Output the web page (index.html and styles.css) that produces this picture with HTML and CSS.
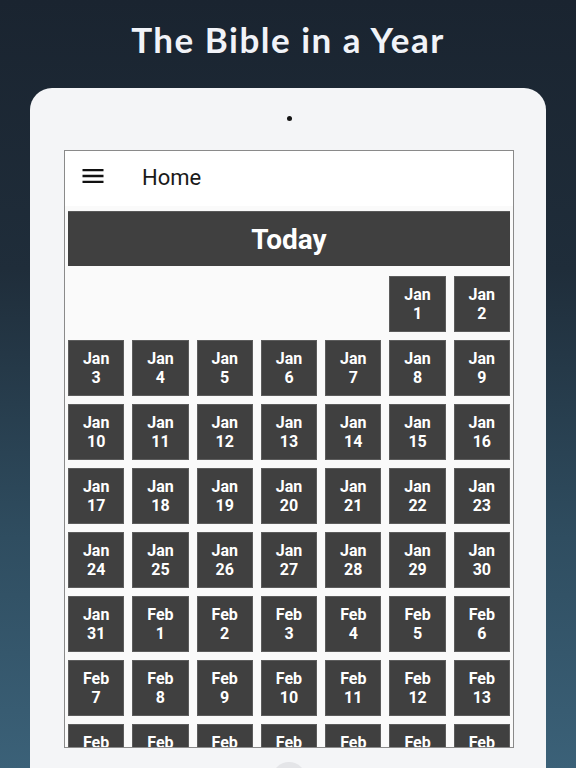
FILE: index.html
```html
<!DOCTYPE html>
<html lang="en">
<head>
	<meta charset="UTF-8">
	<title>The Bible in a Year</title>
	<link rel="stylesheet" href="styles.css">
</head>
<body>

	<h1 class="title">The Bible in a Year</h1>

	<div class="tablet">
		<div class="camera"></div>

		<div class="screen">
			<div class="appbar">
				<svg class="menu" width="28" height="28" viewBox="0 0 24 24">
					<path d="M3 18h18v-2H3v2zm0-5h18v-2H3v2zm0-7v2h18V6H3z" fill="#111"/>
				</svg>
				<span class="page">Home</span>
			</div>

			<div class="today">Today</div>

			<div class="days"></div>
		</div>

		<div class="home-btn"></div>
	</div>

	<script>
		var $days = document.querySelector(".days");
		var months = [["Jan", 31], ["Feb", 20]];	// дальше экран всё равно обрезает

		// 1 января - пятница, перед ним 5 пустых клеток
		for (var i = 0; i < 5; i++) {
			var blank = document.createElement("div");
			blank.className = "blank";
			$days.appendChild(blank);
		}

		months.forEach(function (m) {
			for (var d = 1; d <= m[1]; d++) {
				var day = document.createElement("div");
				day.className = "day";
				day.innerHTML = m[0] + "<br>" + d;
				$days.appendChild(day);
			}
		});
	</script>
</body>
</html>
```

FILE: styles.css
```css
body {
	margin: 0;
	height: 768px;
	overflow: hidden;
	background: linear-gradient(to bottom, #1a2430 0%, #1f2d3a 35%, #2f4d60 70%, #3b6178 100%);
	font-family: Roboto, "Liberation Sans", sans-serif;
}
.title {
	margin: 0;
	height: 88px;
	padding-top: 18px;
	box-sizing: border-box;
	text-align: center;
	color: #f1f3f8;
	font-family: Lato, "Open Sans", sans-serif;
	font-size: 35px;
	font-weight: 700;
	letter-spacing: 1.5px;
}
.tablet {
	margin: 0 30px;
	height: 680px;
	padding: 28px 32px 0 34px;
	box-sizing: border-box;
	background: #f4f5f7;
	border-radius: 22px 22px 0 0;
	overflow: hidden;
}
.camera {
	width: 5px;
	height: 5px;
	margin: 0 auto 29px;
	border-radius: 50%;
	background: #151515;
}
.screen {
	height: 598px;
	padding: 0 3px;
	box-sizing: border-box;
	border: 1px solid #8a8a8a;
	background: #fafafa;
	overflow: hidden;
}
.appbar {
	height: 55px;
	margin: 0 -3px;
	display: flex;
	align-items: center;
	background: #fff;
}
.menu {
	margin-left: 14px;
	margin-bottom: 5px;
}
.page {
	margin-left: 35px;
	margin-bottom: 2px;
	font-size: 22px;
	color: #1a1a1a;
}
.today {
	height: 55px;
	margin-top: 5px;
	display: flex;
	align-items: center;
	justify-content: center;
	background: #404040;
	border-top: 1px solid #5a5a5a;
	box-sizing: border-box;
	color: #fff;
	font-size: 28px;
	font-weight: 700;
}
.days {
	margin-top: 10px;
	display: grid;
	grid-template-columns: repeat(7, 1fr);
	gap: 8px;
}
.day, .blank {
	height: 56px;
}
.day {
	display: flex;
	align-items: center;
	justify-content: center;
	text-align: center;
	background: #404040;
	border: 1px solid #5c5c5c;
	box-sizing: border-box;
	color: #fff;
	font-size: 16px;
	font-weight: 700;
	line-height: 19px;
}
.home-btn {
	width: 34px;
	height: 34px;
	margin: 14px auto 0;
	border-radius: 50%;
	background: #e4e5e8;
}
```
